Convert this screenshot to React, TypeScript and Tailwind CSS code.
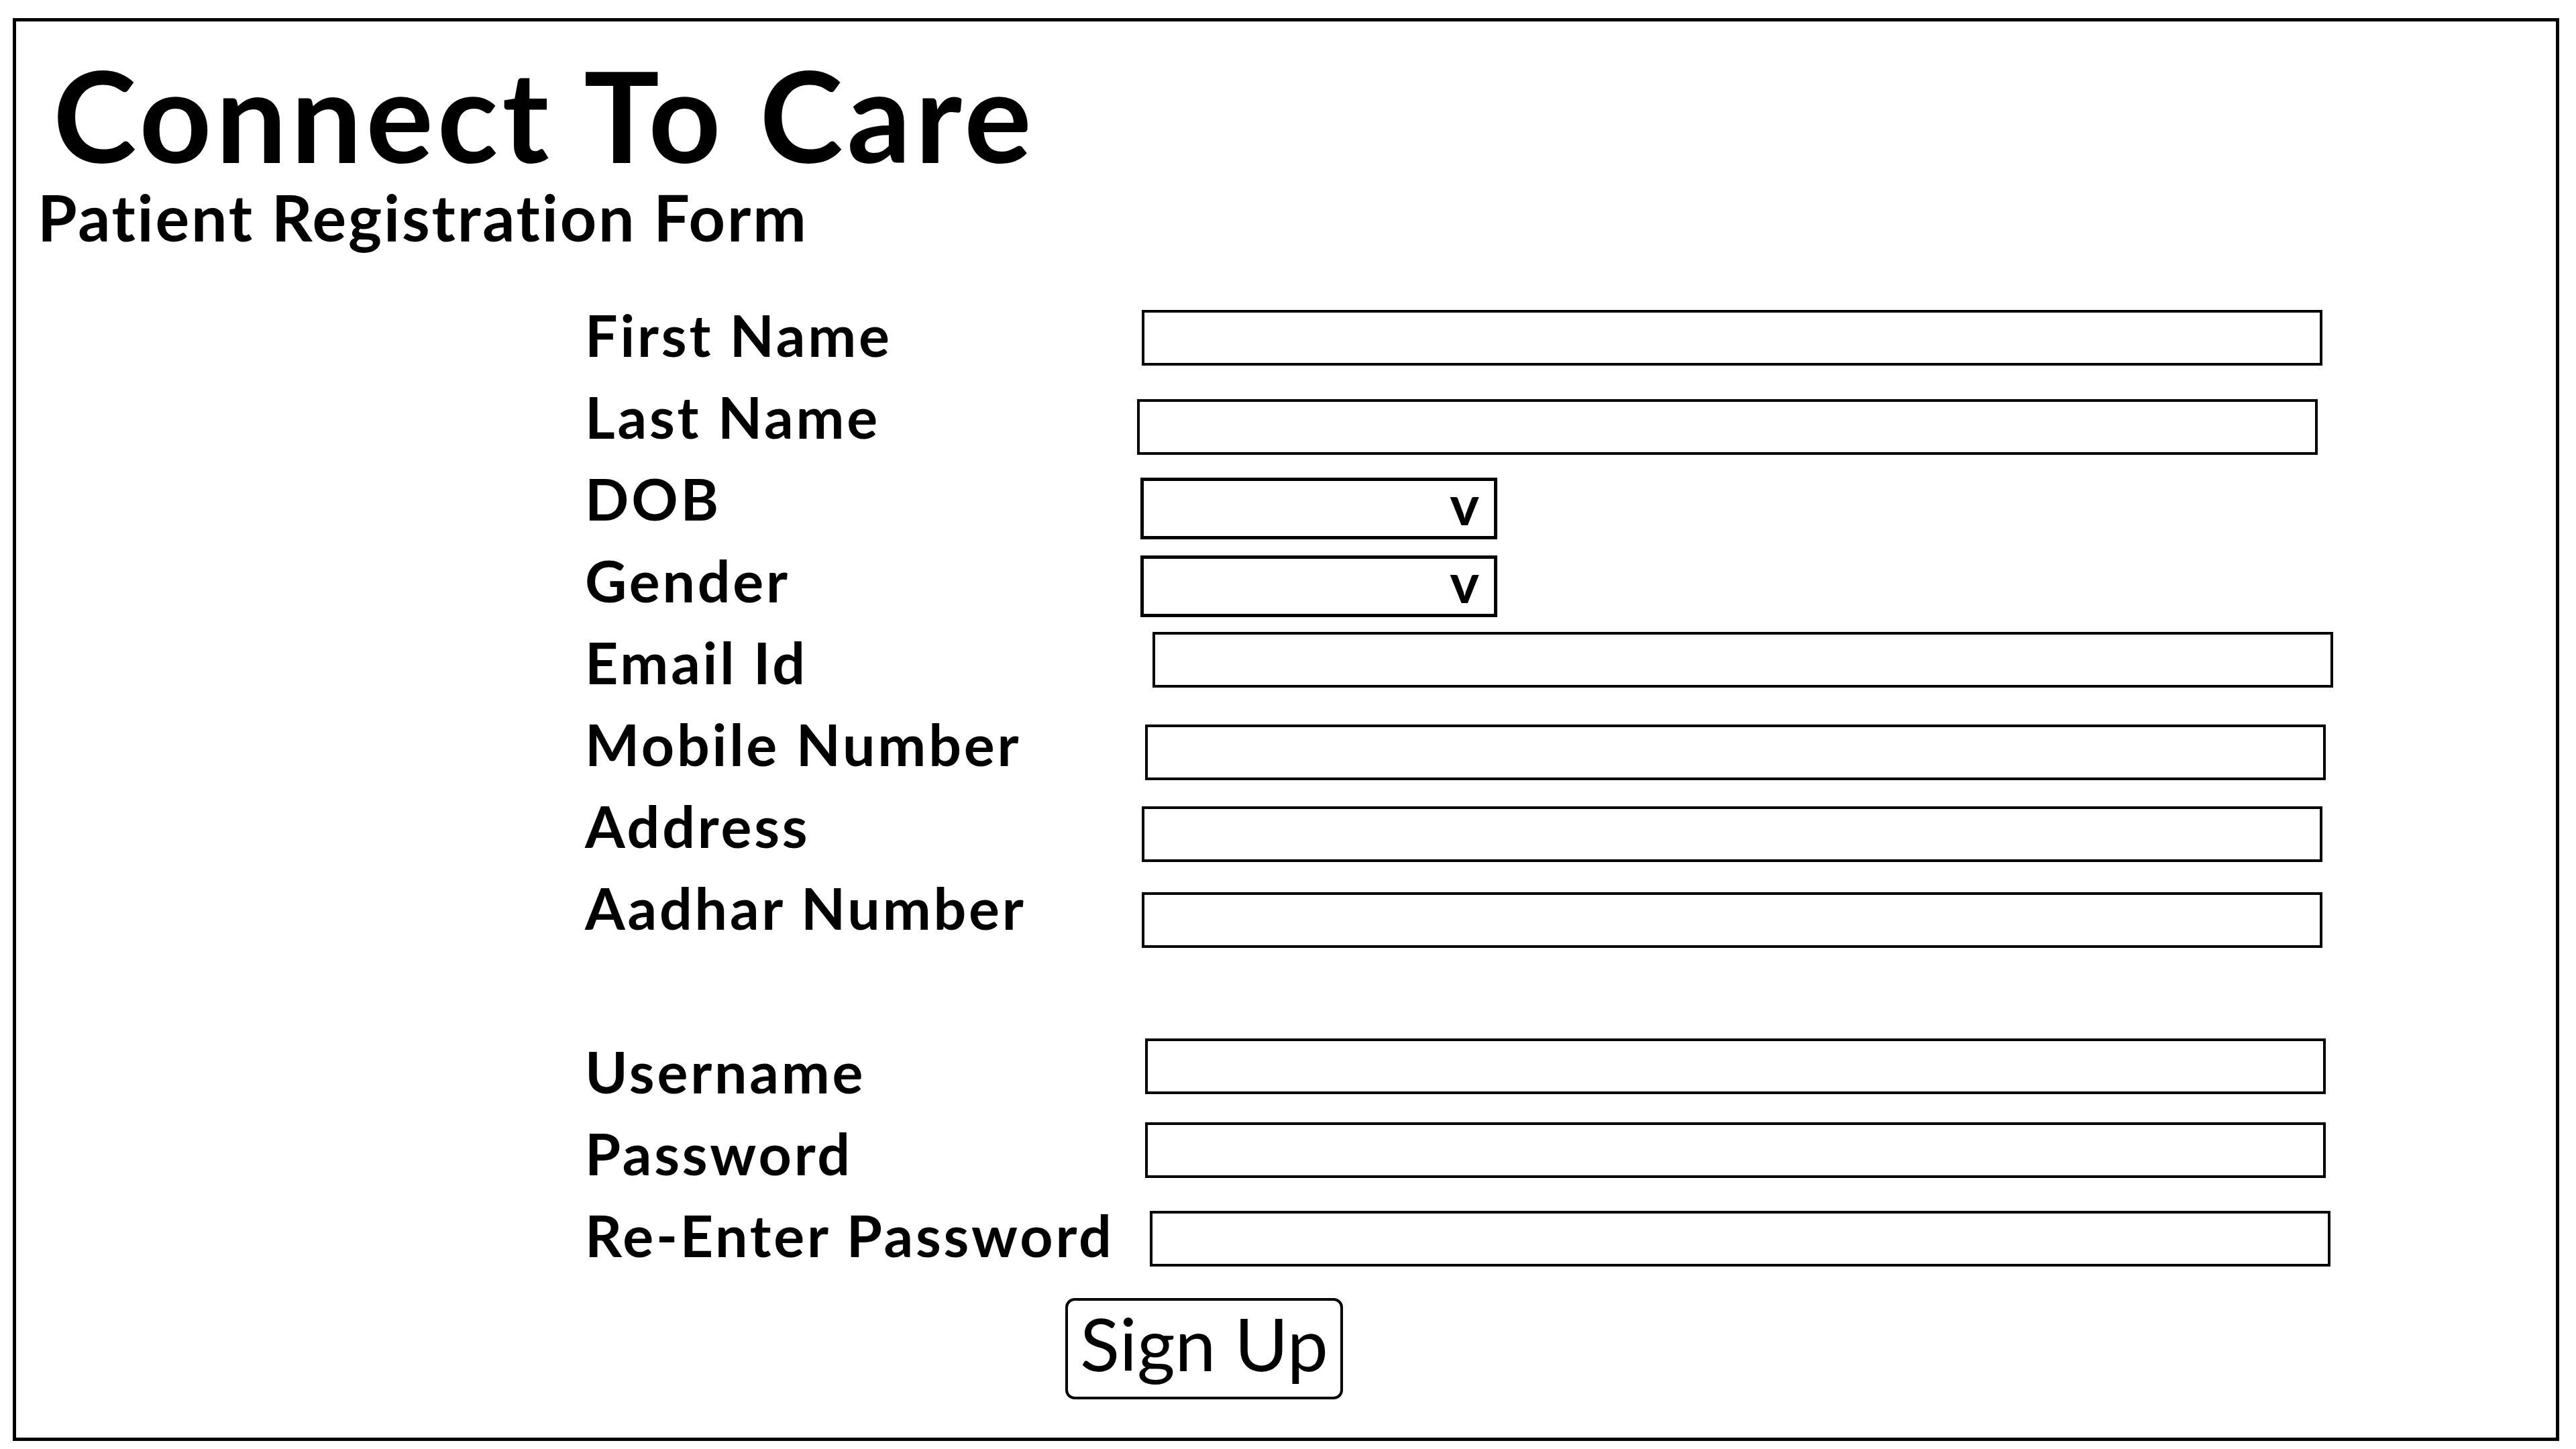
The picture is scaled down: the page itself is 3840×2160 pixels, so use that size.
import React from 'react';

type Field = {
  label: string;
  kind: 'text' | 'select' | 'gap';
  top?: string;
  shift?: string;
};

// per-row nudges copied from the mockup, which is hand drawn
const fields: Field[] = [
  { label: 'First Name', kind: 'text', top: 'mt-[24px]', shift: 'ml-0' },
  { label: 'Last Name', kind: 'text', top: 'mt-[35px]', shift: '-ml-[7px]' },
  { label: 'DOB', kind: 'select', top: 'mt-[30px]', shift: '-ml-[2px]' },
  { label: 'Gender', kind: 'select', top: 'mt-[24px]', shift: '-ml-[2px]' },
  { label: 'Email Id', kind: 'text', top: 'mt-[16px]', shift: 'ml-[16px]' },
  { label: 'Mobile Number', kind: 'text', top: 'mt-[32px]', shift: 'ml-[5px]' },
  { label: 'Address', kind: 'text', top: 'mt-[32px]', shift: 'ml-0' },
  { label: 'Aadhar Number', kind: 'text', top: 'mt-[38px]', shift: 'ml-0' },
  { label: '', kind: 'gap' },
  { label: 'Username', kind: 'text', top: 'mt-[12px]', shift: 'ml-[5px]' },
  { label: 'Password', kind: 'text', top: 'mt-[15px]', shift: 'ml-[5px]' },
  { label: 'Re-Enter Password', kind: 'text', top: 'mt-[25px]', shift: 'ml-[12px]' },
];

const App: React.FC = () => {
  return (
    <div className="w-[3840px] h-[2160px] bg-white text-black font-['Lato',sans-serif] overflow-hidden [font-variant-ligatures:none]">
      <div className="ml-[19px] mt-[27px] w-[3796px] h-[2121px] border-[5px] border-black flex flex-col">
        <h1 className="ml-[55px] mt-[44px] text-[188px] leading-[188px] font-bold tracking-[6px]">Connect To Care</h1>
        <h2 className="ml-[32px] mt-[12px] text-[95px] leading-[95px] font-bold tracking-[2.8px]">Patient Registration Form</h2>

        <form className="ml-[848px] mt-[67px] flex flex-col" onSubmit={e => e.preventDefault()}>
          {fields.map((f, i) => {
            if (f.kind === 'gap') return <div key={i} className="h-[122px]" />;
            return (
              <div key={i} className="flex items-start h-[122px]">
                <label className="w-[830px] shrink-0 text-[86px] leading-[122px] font-bold tracking-[3.8px] whitespace-nowrap">
                  {f.label}
                </label>
                {f.kind === 'text' ? (
                  <input
                    type="text"
                    className={`${f.top} ${f.shift} w-[1760px] h-[83px] border-[4px] border-black bg-white outline-none`}
                  />
                ) : (
                  <div
                    className={`${f.top} ${f.shift} w-[532px] h-[92px] border-[5px] border-black flex items-center justify-end pr-[22px] pb-[14px]`}
                  >
                    <span className="text-[83px] leading-none font-bold">v</span>
                  </div>
                )}
              </div>
            );
          })}

          <button
            type="submit"
            className="ml-[716px] mt-[33px] w-[414px] h-[151px] border-[4px] border-black rounded-[14px] bg-white flex items-center justify-center pb-[18px]"
          >
            <span className="text-[109px] leading-none font-normal">Sign Up</span>
          </button>
        </form>
      </div>
    </div>
  );
};

export default App;
